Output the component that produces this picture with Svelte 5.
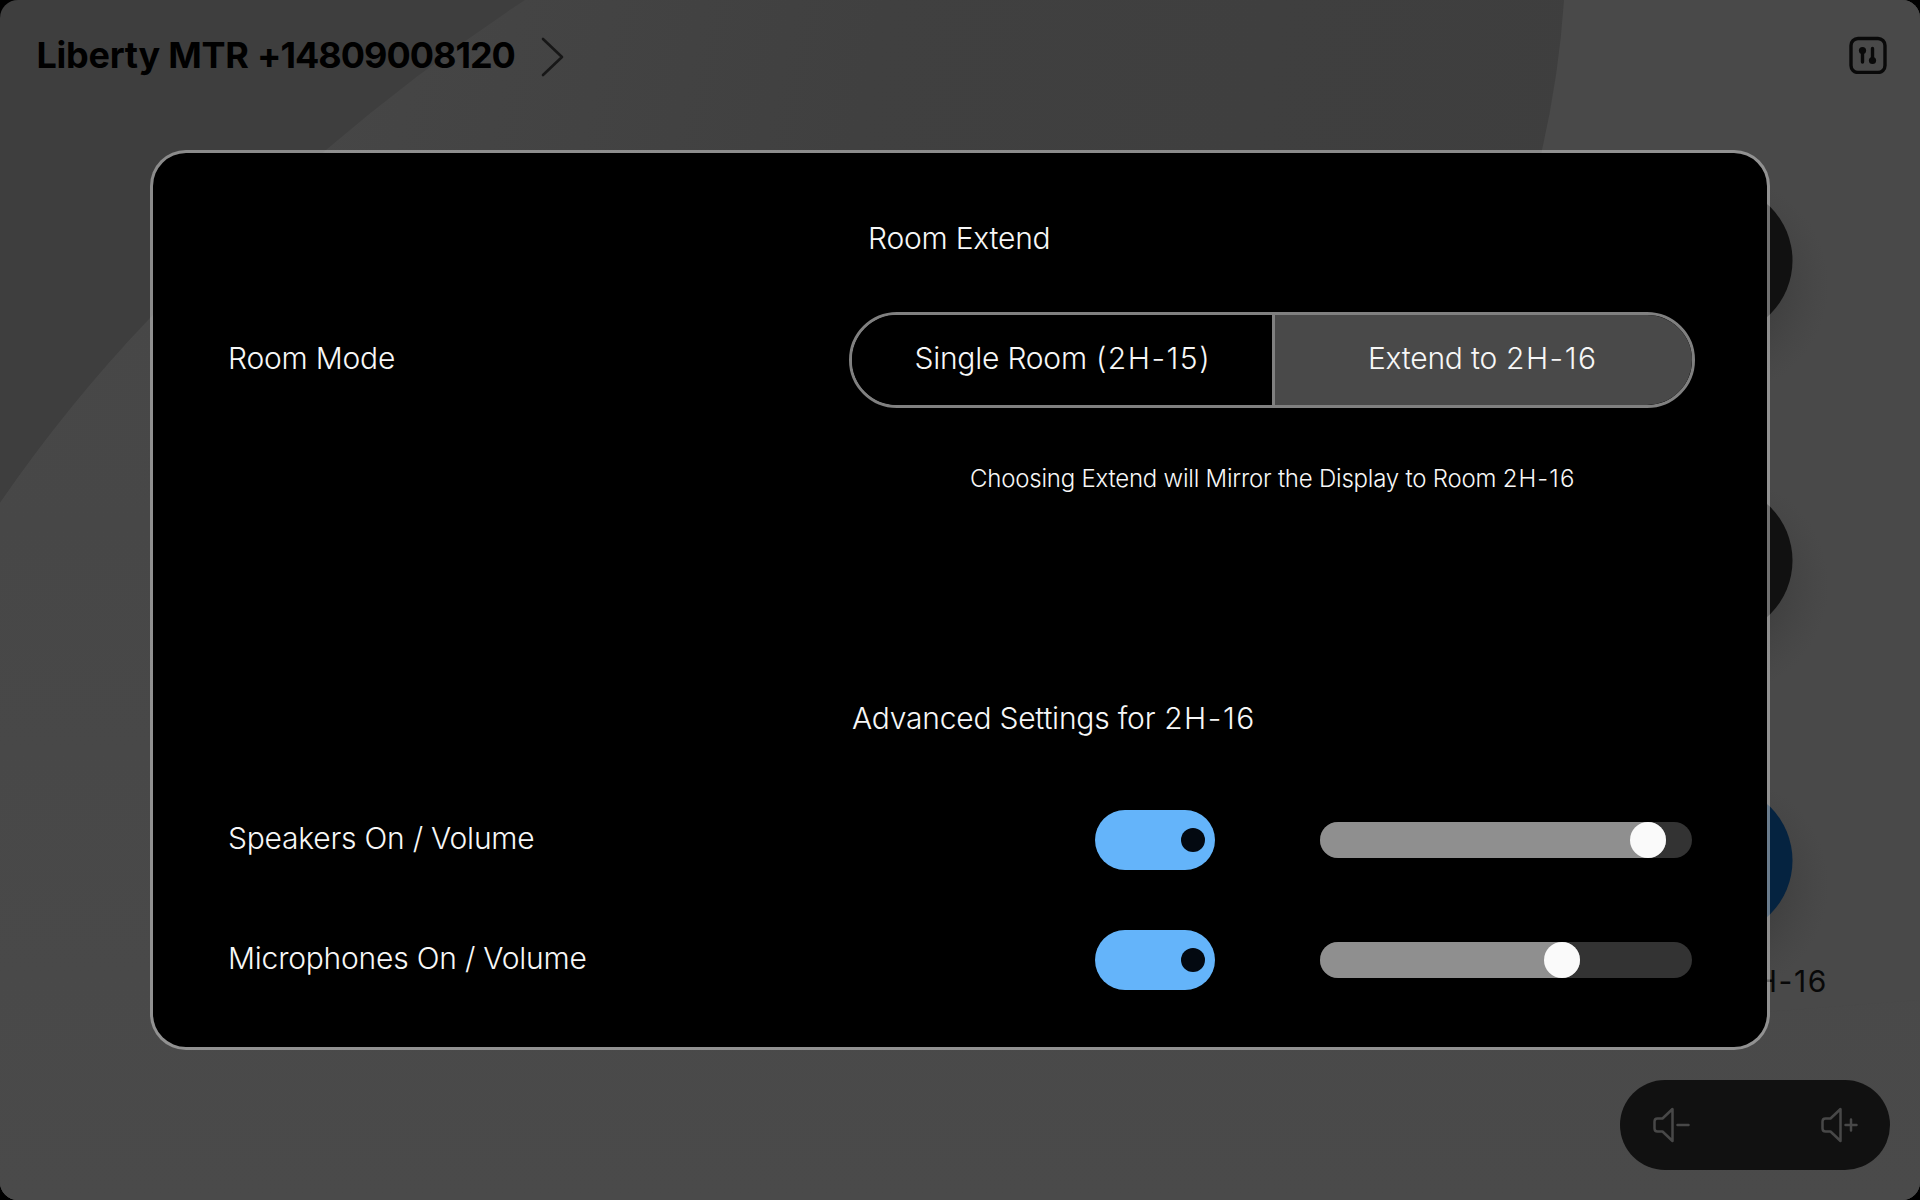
<script>
  const sliders = [
    { label: 'Speakers On / Volume', offset: 309.5 },
    { label: 'Microphones On / Volume', offset: 224 }
  ];
</script>

<div class="screen">
  <svg class="wallpaper" viewBox="0 0 1920 1200" aria-hidden="true">
    <defs>
      <linearGradient id="sweep" gradientUnits="userSpaceOnUse" x1="200" y1="200" x2="1560" y2="500">
        <stop offset="0" stop-color="#474747" />
        <stop offset=".45" stop-color="#404040" />
        <stop offset="1" stop-color="#3e3e3e" />
      </linearGradient>
      <linearGradient id="fade" x1="0" y1="0" x2="0" y2="1">
        <stop offset="0" stop-color="#484848" stop-opacity="0" />
        <stop offset=".25" stop-color="#474747" />
        <stop offset="1" stop-color="#4a4a4a" />
      </linearGradient>
      <radialGradient id="shade">
        <stop offset=".5" stop-color="#3f3f3f" />
        <stop offset="1" stop-color="#444" stop-opacity="0" />
      </radialGradient>
      <clipPath id="disc"><path d="M0 503Q68 404 150 318Q232 230 326 150Q422 68 525 0H1920V1200H0Z" /></clipPath>
    </defs>
    <rect width="1920" height="1200" fill="#3e3e3e" />
    <g clip-path="url(#disc)">
      <rect width="1920" height="1200" fill="url(#sweep)" />
      <rect y="300" width="1920" height="900" fill="url(#fade)" />
    </g>
    <path d="M1564 0Q1559 75 1542 150Q1500 400 1400 600V1040L1920 1000V0Z" fill="#494949" />
    <g fill="url(#shade)">
      <circle cx="1717" cy="285" r="112" />
      <circle cx="1717" cy="585" r="112" />
      <circle cx="1717" cy="885" r="112" />
    </g>
    <circle cx="1717" cy="260.500" r="75.500" fill="#111" />
    <circle cx="1717" cy="560.500" r="75.500" fill="#111" />
    <circle cx="1717" cy="860.500" r="75.500" fill="#052340" />
  </svg>

  <header>
    <div class="room">
      <h1>Liberty MTR <span>+14809008120</span></h1>
      <svg width="24" height="42" viewBox="0 0 24 42" fill="none" stroke="#171717" stroke-width="2.6" stroke-linecap="round" stroke-linejoin="round"><path d="M3 3L22 21L3 39" /></svg>
    </div>
    <svg width="38" height="38" viewBox="0 0 38 38" fill="none" stroke="#090909" stroke-width="3.4" stroke-linecap="round">
      <rect x="2" y="2.500" width="34" height="34" rx="7" />
      <path d="M13.500 14V26M23.500 12.500V24" />
      <g fill="#090909" stroke="none"><circle cx="13.500" cy="14.500" r="3.600" /><circle cx="23.500" cy="24.500" r="3.600" /></g>
    </svg>
  </header>

  <span class="tile-label">2H-16</span>

  <div class="volume">
    <svg width="40" height="36" viewBox="0 0 40 36"><path d="M20.500 2V34L10.500 24.500H5.500Q2.500 24.500 2.500 21.500V14.500Q2.500 11.500 5.500 11.500H10.500ZM25.500 18H36.500" /></svg>
    <svg width="40" height="36" viewBox="0 0 40 36"><path d="M20.500 2V34L10.500 24.500H5.500Q2.500 24.500 2.500 21.500V14.500Q2.500 11.500 5.500 11.500H10.500ZM25.500 18H36.500M31 12.500V23.500" /></svg>
  </div>

  <section class="panel">
    <h2 class="extend">Room Extend</h2>
    <div class="row">
      <span class="label">Room Mode</span>
      <div class="segments">
        <button><span class="label">Single Room <span class="code">(2H-15)</span></span></button>
        <button class="active"><span class="label">Extend to <span class="code">2H-16</span></span></button>
      </div>
    </div>
    <p class="hint">Choosing Extend will Mirror the Display to Room <span class="code">2H-16</span></p>
    <div></div>
    <h2 class="advanced">Advanced Settings for <span class="code">2H-16</span></h2>
    {#each sliders as s}
      <div class="row">
        <span class="label">{s.label}</span>
        <div class="toggle"><i></i></div>
        <div class="slider">
          <div class="fill" style="width: {s.offset + 36}px"><i></i></div>
        </div>
      </div>
    {/each}
  </section>
</div>

<style>
  :global(body) { background: #000; }
  .screen {
    position: relative; box-sizing: border-box; width: 1920px; height: 1200px;
    border-radius: 18px; overflow: hidden;
    font-family: Inter, "Liberation Sans", sans-serif; font-size: 30px; font-weight: 300;
    white-space: nowrap;
  }
  .wallpaper { position: absolute; inset: 0; }
  header { position: relative; display: flex; justify-content: space-between; padding: 36px 33px 0 36.5px; }
  .room { display: flex; justify-content: space-between; width: 527.5px; height: 42px; }
  h1 { margin: 0; font-size: 36px; font-weight: 700; line-height: 38px; color: #000; letter-spacing: -.25px; }
  h1 span { letter-spacing: -1px; }
  h2, p { margin: 0; font-weight: 300; }
  .tile-label { position: absolute; right: 92px; top: 962.5px; font-weight: 400; line-height: 36px; color: #080808; letter-spacing: 1.6px; }
  .volume {
    position: absolute; right: 30px; bottom: 30px; box-sizing: border-box; width: 270px; height: 90px;
    padding: 0 30px 0 32px; border-radius: 45px; background: #111;
    display: flex; align-items: center; justify-content: space-between;
  }
  .volume svg { fill: none; stroke: #484848; stroke-width: 2.5; stroke-linecap: round; stroke-linejoin: round; }
  .panel {
    position: absolute; left: 150px; top: 150px; box-sizing: border-box; width: 1620px; height: 900px;
    padding: 27px 72px 27px 75px; border: 3px solid rgba(255, 255, 255, .4); border-radius: 36px;
    background: #000; background-clip: padding-box; color: #f7f7f7; letter-spacing: -.22px;
    display: grid; grid-template-rows: repeat(7, 120px); align-items: center; line-height: 36px;
  }
  h2, .label { padding-bottom: 4px; }
  .extend { padding-left: 640px; font-size: 30px; }
  .advanced { padding-left: 624px; font-size: 30px; }
  .row { display: flex; align-items: center; }
  .code { margin-left: .8px; letter-spacing: 1.5px; margin-right: -1.5px; }
  .segments {
    box-sizing: border-box; display: flex; width: 846px; height: 96px; margin-left: auto;
    border: 3px solid #808080; border-radius: 48px; overflow: hidden;
  }
  button {
    box-sizing: border-box; width: 420px; padding: 0; border: 0; background: #000; color: inherit;
    font: inherit; letter-spacing: inherit; display: flex; align-items: center; justify-content: center;
  }
  .active { width: 420px; padding-right: 3px; background: #494949; border-left: 3px solid #808080; }
  .hint { width: 846px; margin-left: auto; padding-bottom: 2px; text-align: center; font-size: 24px; }
  .hint .code { letter-spacing: 1.1px; margin-left: 0; }
  .toggle {
    display: flex; align-items: center; justify-content: flex-end; box-sizing: border-box;
    width: 120px; height: 60px; padding-right: 10.5px; margin-left: auto; border-radius: 30px; background: #64b4fa;
  }
  .toggle i { width: 24px; height: 24px; border-radius: 50%; background: #030911; }
  .slider { width: 372px; height: 36px; margin: 0 3px 0 105px; border-radius: 18px; background: #333; }
  .fill { display: flex; justify-content: flex-end; height: 36px; border-radius: 18px; background: #8f8f8f; }
  .fill i { width: 36px; height: 36px; border-radius: 50%; background: #fafafa; }
</style>
